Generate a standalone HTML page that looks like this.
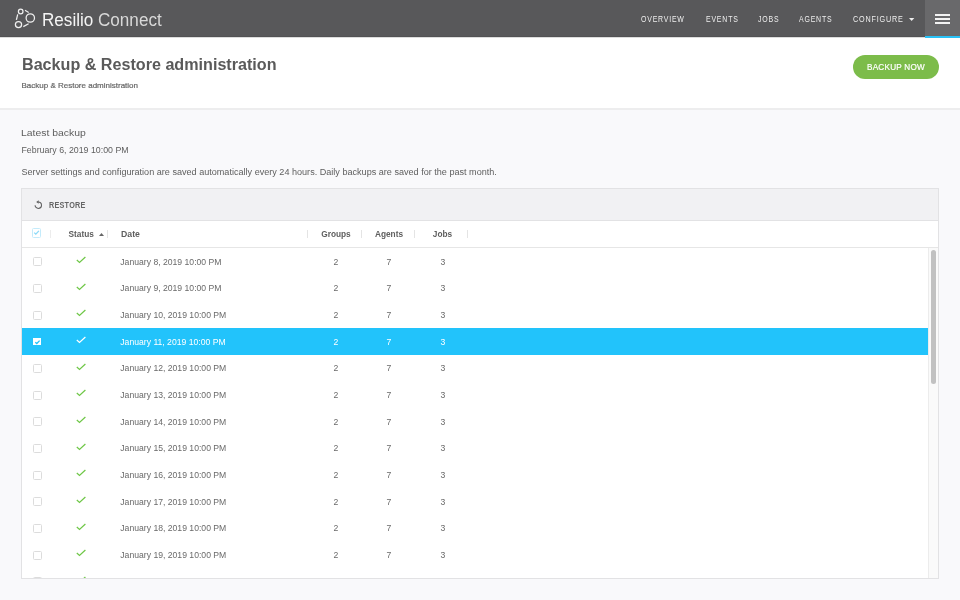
<!DOCTYPE html>
<html><head><meta charset="utf-8">
<style>
*{margin:0;padding:0;box-sizing:border-box}
html,body{width:960px;height:600px;overflow:hidden;background:#f9f9fb;font-family:"Liberation Sans",sans-serif;position:relative}
#wrap{position:absolute;left:0;top:0;width:960px;height:600px;will-change:transform}
.abs{position:absolute;white-space:nowrap}
#top{position:absolute;left:0;top:0;width:960px;height:37px;background:#58585a;border-bottom:1px solid #525254}
#topshadow{position:absolute;left:0;top:37px;width:960px;height:1px;background:#dcdcdc}
#burger{position:absolute;left:925px;top:0;width:35px;height:37px;background:#69696b}
#burger i{position:absolute;left:10px;width:15px;height:2px;background:#f2f2f2}
#burgerline{position:absolute;left:925px;top:36px;width:35px;height:1.8px;background:#29c2f7}
.nav{position:absolute;top:1px;line-height:36px;height:36px;font-size:8.7px;color:#eeeeee;letter-spacing:1px;transform-origin:0 0;transform:scaleX(0.8)}
#phead{position:absolute;left:0;top:38px;width:960px;height:70px;background:#fff}
#pheadb{position:absolute;left:0;top:108px;width:960px;height:1.5px;background:#ededee}
#panel{position:absolute;left:21px;top:188px;width:918px;height:391px;border:1px solid #e2e2e4;background:#fff;overflow:hidden}
#toolbar{position:absolute;left:0;top:0;width:916px;height:32px;background:#f1f1f3;border-bottom:1px solid #e2e2e4}
#thead{position:absolute;left:0;top:32px;width:916px;height:27px;background:#fff;border-bottom:1px solid #e6e6e6}
.th{position:absolute;top:0;line-height:27px;font-size:8.3px;font-weight:bold;color:#5e5e5e}
.sep{position:absolute;top:9px;width:1px;height:8px;background:#e4e4e4}
#body{position:absolute;left:0;top:59px;width:906px;height:331px;overflow:hidden}
.row{position:absolute;left:0;width:906px;height:26.6667px;background:#fff}
.row.sel{background:#22c3fb}
.cb{position:absolute;left:10.5px;top:9.3px;width:9px;height:9px;border:1px solid #dcdcdc;border-radius:1.5px;background:#fff}
.cb svg{position:absolute;left:-1px;top:-1px}
.cbon{position:absolute;left:11.2px;top:9.9px;width:7.8px;height:7.3px;background:#fff}
.cbon svg{position:absolute;left:0;top:0}
.ok{position:absolute;left:53.6px;top:8.1px}
.dt{position:absolute;left:98.3px;top:0.6px;line-height:26.6667px;font-size:8.65px;color:#6a6a6a}
.row.sel .dt,.row.sel .n{color:#fff}
.n{position:absolute;top:0.6px;line-height:26.6667px;font-size:8.65px;color:#6a6a6a;width:54px;text-align:center}
.n.g{left:287px} .n.a{left:340px} .n.j{left:394px}
#track{position:absolute;left:906px;top:59px;width:10px;height:331px;background:#fafafa;border-left:1px solid #ececec}
#thumb{position:absolute;left:2px;top:2px;width:5px;height:133.5px;background:#c1c1c1;border-radius:3px}
</style></head><body><div id="wrap">
<div id="top"></div>
<div id="topshadow"></div>
<svg class="abs" style="left:0;top:0" width="40" height="36" viewBox="0 0 40 36">
 <g fill="none" stroke="#f0f0f0" stroke-width="1.25">
  <circle cx="20.7" cy="11.5" r="2.3"/>
  <circle cx="30.3" cy="18" r="4.2"/>
  <circle cx="18.5" cy="24.6" r="3.1"/>
  <line x1="25" y1="10.3" x2="28.7" y2="12.5"/>
  <line x1="17.7" y1="14.4" x2="16.4" y2="19.8"/>
  <line x1="23.3" y1="26.6" x2="28.6" y2="23.8"/>
 </g>
</svg>
<div class="abs" style="left:42.3px;top:1.5px;line-height:36px;font-size:18px;color:#f4f4f4;transform-origin:0 0;transform:scaleX(0.95)">Resilio</div>
<div class="abs" style="left:98px;top:1.5px;line-height:36px;font-size:18px;color:#d8d8d8;transform-origin:0 0;transform:scaleX(0.95)">Connect</div>
<div class="nav abs" style="left:641px">OVERVIEW</div>
<div class="nav abs" style="left:706px">EVENTS</div>
<div class="nav abs" style="left:758px">JOBS</div>
<div class="nav abs" style="left:798.5px">AGENTS</div>
<div class="nav abs" style="left:853px;transform:scaleX(0.83)">CONFIGURE</div>
<svg class="abs" style="left:908.8px;top:17.8px" width="6" height="4" viewBox="0 0 6 4"><path d="M0 0 L5.3 0 L2.65 2.9 Z" fill="#eeeeee"/></svg>
<div id="burger"><i style="top:14px"></i><i style="top:18px"></i><i style="top:22px"></i></div>
<div id="burgerline"></div>

<div id="phead"></div>
<div id="pheadb"></div>
<div class="abs" style="left:22px;top:52.5px;line-height:24px;font-size:16px;font-weight:bold;color:#5a5a5a;transform-origin:0 0;transform:scaleX(1.008)">Backup &amp; Restore administration</div>
<div class="abs" style="left:21.5px;top:79.5px;line-height:12px;font-size:8px;color:#666;-webkit-text-stroke:0.2px #666">Backup &amp; Restore administration</div>
<div class="abs" style="left:852.5px;top:55px;width:86px;height:24px;border-radius:12px;background:#7cbc4a"></div><div class="abs" style="left:867.2px;top:55px;height:24px;color:#fff;font-size:8.7px;line-height:24px;letter-spacing:0.25px;-webkit-text-stroke:0.2px #fff;transform-origin:0 0;transform:scaleX(0.94)">BACKUP NOW</div>

<div class="abs" style="left:21px;top:124.5px;line-height:16px;font-size:9.6px;color:#5e5e5e;transform-origin:0 0;transform:scaleX(1.085)">Latest backup</div>
<div class="abs" style="left:21.5px;top:144px;line-height:12px;font-size:8.8px;color:#5e5e5e">February 6, 2019 10:00 PM</div>
<div class="abs" style="left:21.5px;top:166.3px;line-height:12px;font-size:9.08px;color:#5e5e5e">Server settings and configuration are saved automatically every 24 hours. Daily backups are saved for the past month.</div>

<div id="panel">
 <div id="toolbar">
  <svg class="abs" style="left:12px;top:11px" width="10" height="10" viewBox="0 0 10 10"><path d="M4.3 2.0 A3.2 3.2 0 1 1 1.1 5.2" fill="none" stroke="#606060" stroke-width="1.05"/><path d="M2.2 2.0 L4.7 0.3 L4.7 3.7 Z" fill="#606060"/></svg>
  <div class="abs" style="left:26.5px;top:0px;line-height:32px;font-size:9.3px;font-weight:bold;letter-spacing:0.3px;color:#666;transform-origin:0 0;transform:scaleX(0.78)">RESTORE</div>
 </div>
 <div id="thead">
  <div class="cb" style="left:10px;top:7.3px;width:9.3px;height:9.3px;border-color:#c4ebfb"><svg width="9" height="9" viewBox="0 0 9 9"><path d="M2.2 4.6 L3.8 6.1 L6.9 2.9" fill="none" stroke="#8ad9f8" stroke-width="1.3"/></svg></div>
  <div class="sep" style="left:28.1px;background:#ececec"></div>
  <div class="th" style="left:46.5px">Status</div>
  <svg class="abs" style="left:77px;top:12px" width="5" height="3" viewBox="0 0 5 3"><path d="M0 3 L5 3 L2.5 0 Z" fill="#666"/></svg>
  <div class="sep" style="left:84.7px"></div>
  <div class="th" style="left:98.5px;transform-origin:0 0;transform:scaleX(1.05)">Date</div>
  <div class="sep" style="left:284.6px"></div>
  <div class="th" style="left:287px;width:54px;text-align:center">Groups</div>
  <div class="sep" style="left:338.5px"></div>
  <div class="th" style="left:340px;width:54px;text-align:center">Agents</div>
  <div class="sep" style="left:391.9px"></div>
  <div class="th" style="left:394px;width:53px;text-align:center">Jobs</div>
  <div class="sep" style="left:444.7px"></div>
 </div>
 <div id="body">
<div class="row" style="top:0.000px">
<div class="cb"></div>
<svg class="ok" width="11" height="8" viewBox="0 0 11 8"><path d="M0.8 4.0 L3.5 6.5 L9.4 1.0" fill="none" stroke="#6fc747" stroke-width="1.2"/></svg>
<div class="dt">January 8, 2019 10:00 PM</div>
<div class="n g">2</div><div class="n a">7</div><div class="n j">3</div>
</div><div class="row" style="top:26.667px">
<div class="cb"></div>
<svg class="ok" width="11" height="8" viewBox="0 0 11 8"><path d="M0.8 4.0 L3.5 6.5 L9.4 1.0" fill="none" stroke="#6fc747" stroke-width="1.2"/></svg>
<div class="dt">January 9, 2019 10:00 PM</div>
<div class="n g">2</div><div class="n a">7</div><div class="n j">3</div>
</div><div class="row" style="top:53.333px">
<div class="cb"></div>
<svg class="ok" width="11" height="8" viewBox="0 0 11 8"><path d="M0.8 4.0 L3.5 6.5 L9.4 1.0" fill="none" stroke="#6fc747" stroke-width="1.2"/></svg>
<div class="dt">January 10, 2019 10:00 PM</div>
<div class="n g">2</div><div class="n a">7</div><div class="n j">3</div>
</div><div class="row sel" style="top:80.000px">
<div class="cbon"><svg width="8" height="7.5" viewBox="0 0 8 7.5"><path d="M2.3 4.2 L3.8 5.5 L6.6 2.6" fill="none" stroke="#22c3fb" stroke-width="1.35"/></svg></div>
<svg class="ok" width="11" height="8" viewBox="0 0 11 8"><path d="M0.8 4.0 L3.5 6.5 L9.4 1.0" fill="none" stroke="#ffffff" stroke-width="1.2"/></svg>
<div class="dt">January 11, 2019 10:00 PM</div>
<div class="n g">2</div><div class="n a">7</div><div class="n j">3</div>
</div><div class="row" style="top:106.667px">
<div class="cb"></div>
<svg class="ok" width="11" height="8" viewBox="0 0 11 8"><path d="M0.8 4.0 L3.5 6.5 L9.4 1.0" fill="none" stroke="#6fc747" stroke-width="1.2"/></svg>
<div class="dt">January 12, 2019 10:00 PM</div>
<div class="n g">2</div><div class="n a">7</div><div class="n j">3</div>
</div><div class="row" style="top:133.333px">
<div class="cb"></div>
<svg class="ok" width="11" height="8" viewBox="0 0 11 8"><path d="M0.8 4.0 L3.5 6.5 L9.4 1.0" fill="none" stroke="#6fc747" stroke-width="1.2"/></svg>
<div class="dt">January 13, 2019 10:00 PM</div>
<div class="n g">2</div><div class="n a">7</div><div class="n j">3</div>
</div><div class="row" style="top:160.000px">
<div class="cb"></div>
<svg class="ok" width="11" height="8" viewBox="0 0 11 8"><path d="M0.8 4.0 L3.5 6.5 L9.4 1.0" fill="none" stroke="#6fc747" stroke-width="1.2"/></svg>
<div class="dt">January 14, 2019 10:00 PM</div>
<div class="n g">2</div><div class="n a">7</div><div class="n j">3</div>
</div><div class="row" style="top:186.667px">
<div class="cb"></div>
<svg class="ok" width="11" height="8" viewBox="0 0 11 8"><path d="M0.8 4.0 L3.5 6.5 L9.4 1.0" fill="none" stroke="#6fc747" stroke-width="1.2"/></svg>
<div class="dt">January 15, 2019 10:00 PM</div>
<div class="n g">2</div><div class="n a">7</div><div class="n j">3</div>
</div><div class="row" style="top:213.334px">
<div class="cb"></div>
<svg class="ok" width="11" height="8" viewBox="0 0 11 8"><path d="M0.8 4.0 L3.5 6.5 L9.4 1.0" fill="none" stroke="#6fc747" stroke-width="1.2"/></svg>
<div class="dt">January 16, 2019 10:00 PM</div>
<div class="n g">2</div><div class="n a">7</div><div class="n j">3</div>
</div><div class="row" style="top:240.000px">
<div class="cb"></div>
<svg class="ok" width="11" height="8" viewBox="0 0 11 8"><path d="M0.8 4.0 L3.5 6.5 L9.4 1.0" fill="none" stroke="#6fc747" stroke-width="1.2"/></svg>
<div class="dt">January 17, 2019 10:00 PM</div>
<div class="n g">2</div><div class="n a">7</div><div class="n j">3</div>
</div><div class="row" style="top:266.667px">
<div class="cb"></div>
<svg class="ok" width="11" height="8" viewBox="0 0 11 8"><path d="M0.8 4.0 L3.5 6.5 L9.4 1.0" fill="none" stroke="#6fc747" stroke-width="1.2"/></svg>
<div class="dt">January 18, 2019 10:00 PM</div>
<div class="n g">2</div><div class="n a">7</div><div class="n j">3</div>
</div><div class="row" style="top:293.334px">
<div class="cb"></div>
<svg class="ok" width="11" height="8" viewBox="0 0 11 8"><path d="M0.8 4.0 L3.5 6.5 L9.4 1.0" fill="none" stroke="#6fc747" stroke-width="1.2"/></svg>
<div class="dt">January 19, 2019 10:00 PM</div>
<div class="n g">2</div><div class="n a">7</div><div class="n j">3</div>
</div><div class="row" style="top:320.000px">
<div class="cb"></div>
<svg class="ok" width="11" height="8" viewBox="0 0 11 8"><path d="M0.8 4.0 L3.5 6.5 L9.4 1.0" fill="none" stroke="#6fc747" stroke-width="1.2"/></svg>
<div class="dt">January 20, 2019 10:00 PM</div>
<div class="n g">2</div><div class="n a">7</div><div class="n j">3</div>
</div>
 </div>
 <div id="track"><div id="thumb"></div></div>
</div>
</div></body></html>
